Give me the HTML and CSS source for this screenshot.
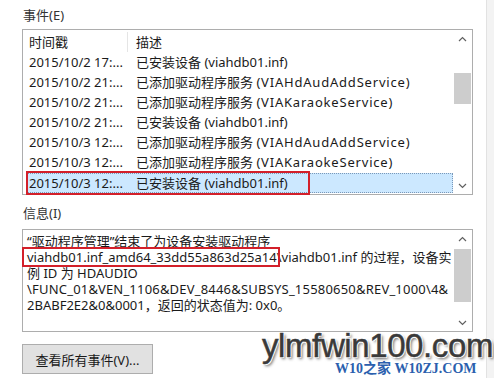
FILE: index.html
```html
<!DOCTYPE html>
<html lang="zh-CN">
<head>
    <meta charset="UTF-8">
    <meta name="viewport" content="width=device-width, initial-scale=1.0">
    <title>事件</title>
    <link rel="stylesheet" href="styles.css">
</head>
<body>
<div class="window">
    <div class="panel">
        <div class="label">事件(E)</div>
        <div class="box events">
            <div class="list">
                <div class="row head">
                    <div class="time">时间戳</div>
                    <div class="desc">描述</div>
                </div>
                <div class="row"><div class="time">2015/10/2 17:...</div><div class="desc">已安装设备 (viahdb01.inf)</div></div>
                <div class="row"><div class="time">2015/10/2 21:...</div><div class="desc">已添加驱动程序服务 <span class="svc">(VIAHdAudAddService)</span></div></div>
                <div class="row"><div class="time">2015/10/2 21:...</div><div class="desc">已添加驱动程序服务 <span class="svc">(VIAKaraokeService)</span></div></div>
                <div class="row"><div class="time">2015/10/2 21:...</div><div class="desc">已安装设备 (viahdb01.inf)</div></div>
                <div class="row"><div class="time">2015/10/3 12:...</div><div class="desc">已添加驱动程序服务 <span class="svc">(VIAHdAudAddService)</span></div></div>
                <div class="row"><div class="time">2015/10/3 12:...</div><div class="desc">已添加驱动程序服务 <span class="svc">(VIAKaraokeService)</span></div></div>
                <div class="row selected"><div class="time">2015/10/3 12:...</div><div class="desc">已安装设备 (viahdb01.inf)</div><span class="redbox"></span></div>
            </div>
            <div class="vscroll">
                <svg class="arrow" width="9" height="6" viewBox="0 0 9 6"><path d="M1 5 L4.5 1.5 L8 5" fill="none" stroke="#606060" stroke-width="1.2"/></svg>
                <div class="track"><div class="thumb ev-thumb"></div></div>
                <svg class="arrow" width="9" height="6" viewBox="0 0 9 6"><path d="M1 1 L4.5 4.5 L8 1" fill="none" stroke="#606060" stroke-width="1.2"/></svg>
            </div>
        </div>

        <div class="label info-label">信息(I)</div>
        <div class="box info">
            <div class="text">
                “驱动程序管理”结束了为设备安装驱动程序<br>
                <span class="mark">viahdb01.inf_amd64_33dd55a863d25a14</span>\viahdb01.inf 的过程，设备实<br>
                例 ID 为 HDAUDIO<br>
                <span class="wide">\FUNC_01&amp;VEN_1106&amp;DEV_8446&amp;SUBSYS_15580650&amp;REV_1000\4&amp;</span><br>
                2BABF2E2&amp;0&amp;0001，返回的状态值为: 0x0。
            </div>
            <div class="vscroll">
                <svg class="arrow" width="9" height="6" viewBox="0 0 9 6"><path d="M1 5 L4.5 1.5 L8 5" fill="none" stroke="#606060" stroke-width="1.2"/></svg>
                <div class="track"><div class="thumb info-thumb"></div></div>
                <svg class="arrow" width="9" height="6" viewBox="0 0 9 6"><path d="M1 1 L4.5 4.5 L8 1" fill="none" stroke="#606060" stroke-width="1.2"/></svg>
            </div>
        </div>

        <button class="btn">查看所有事件(V)...</button>
    </div>
    <div class="edge"></div>
</div>
<div class="watermark">
    <div class="site">ylmfwin100.com</div>
    <div class="sub">W10之家 W10ZJ.COM</div>
</div>
</body>
</html>
```

FILE: styles.css
```css
body{
    margin: 0;
    background: #fff;
    font-family: "Noto Sans", "Noto Sans CJK SC", sans-serif;
    font-size: 13px;
    color: #1a1a1a;
    width: 494px;
    height: 378px;
    overflow: hidden;
    position: relative;
}
.window{
    display: flex;
    height: 378px;
}
.panel{
    width: 451px;
    padding: 5px 0 0 22px;
}
.edge{
    margin-left: 13px;
    flex: 1;
    background: #f3f3f3;
    border-left: 1px solid #e2e2e2;
}
.label{
    height: 20px;
    line-height: 20px;
    padding-left: 1px;
    color: #333;
    margin-bottom: 4px;
}
.info-label{
    margin-top: 8px;
    margin-bottom: 6px;
}
.box{
    border: 1px solid #adadad;
    display: flex;
    background: #fff;
}
.events{
    height: 164px;
}
.info{
    height: 101px;
}
.list{
    flex: 1;
    padding: 2px 0 0 4px;
}
.row{
    position: relative;
    display: flex;
    height: 20px;
    line-height: 20px;
    white-space: nowrap;
}
.row .time{
    width: 99px;
    padding-left: 2px;
}
.row .desc{
    padding-left: 8px;
}
.svc{
    letter-spacing: 0.8px;
}
.head .time{
    border-right: 1px solid #e5e5e5;
    width: 98px;
}
.selected{
    margin-top: 1px;
    background: #cce8ff;
    outline: 1px dotted #7a98b8;
    outline-offset: -1px;
}
.redbox{
    position: absolute;
    left: -1px;
    top: -2px;
    width: 280px;
    height: 20px;
    border: 2px solid #d3202a;
}
.vscroll{
    width: 19px;
    display: flex;
    flex-direction: column;
    align-items: center;
}
.arrow{
    flex: none;
    margin: 6px 0 5px;
}
.track{
    flex: 1;
    width: 17px;
    position: relative;
}
.thumb{
    position: absolute;
    left: 0;
    width: 17px;
    background: #cdcdcd;
}
.ev-thumb{
    top: 26px;
    height: 31px;
}
.info-thumb{
    top: 2px;
    height: 53px;
}
.text{
    flex: 1;
    padding: 3px 0 0 4px;
    line-height: 16px;
    white-space: nowrap;
}
.wide{
    letter-spacing: 0.2px;
}
.mark{
    position: relative;
}
.mark::after{
    content: '';
    position: absolute;
    left: -5px;
    right: -3px;
    top: -1px;
    bottom: -1px;
    border: 2px solid #d3202a;
}
.btn{
    margin-top: 12px;
    width: 131px;
    height: 30px;
    background: #e1e1e1;
    border: 1px solid #adadad;
    font-family: "Noto Sans", "Noto Sans CJK SC", sans-serif;
    font-size: 13px;
    color: #1a1a1a;
    padding: 0;
}
.watermark{
    position: absolute;
    left: 262px;
    top: 331px;
    width: 232px;
}
.site{
    font-family: "Liberation Sans", Arial, sans-serif;
    font-size: 33px;
    line-height: 30px;
    color: #3a3a3a;
    letter-spacing: -0.4px;
    -webkit-text-stroke: 0.5px #3a3a3a;
    text-shadow: -1px -1px 0 #fff, 1px -1px 0 #fff, -1px 1px 0 #fff, 1px 1px 0 #fff, 2px 2px 3px #666;
}
.sub{
    margin: 1px 0 0 73px;
    font-family: "Liberation Serif", "Noto Sans CJK SC", serif;
    font-weight: bold;
    font-size: 14px;
    line-height: 14px;
    color: #2b5fae;
    white-space: nowrap;
}
```
